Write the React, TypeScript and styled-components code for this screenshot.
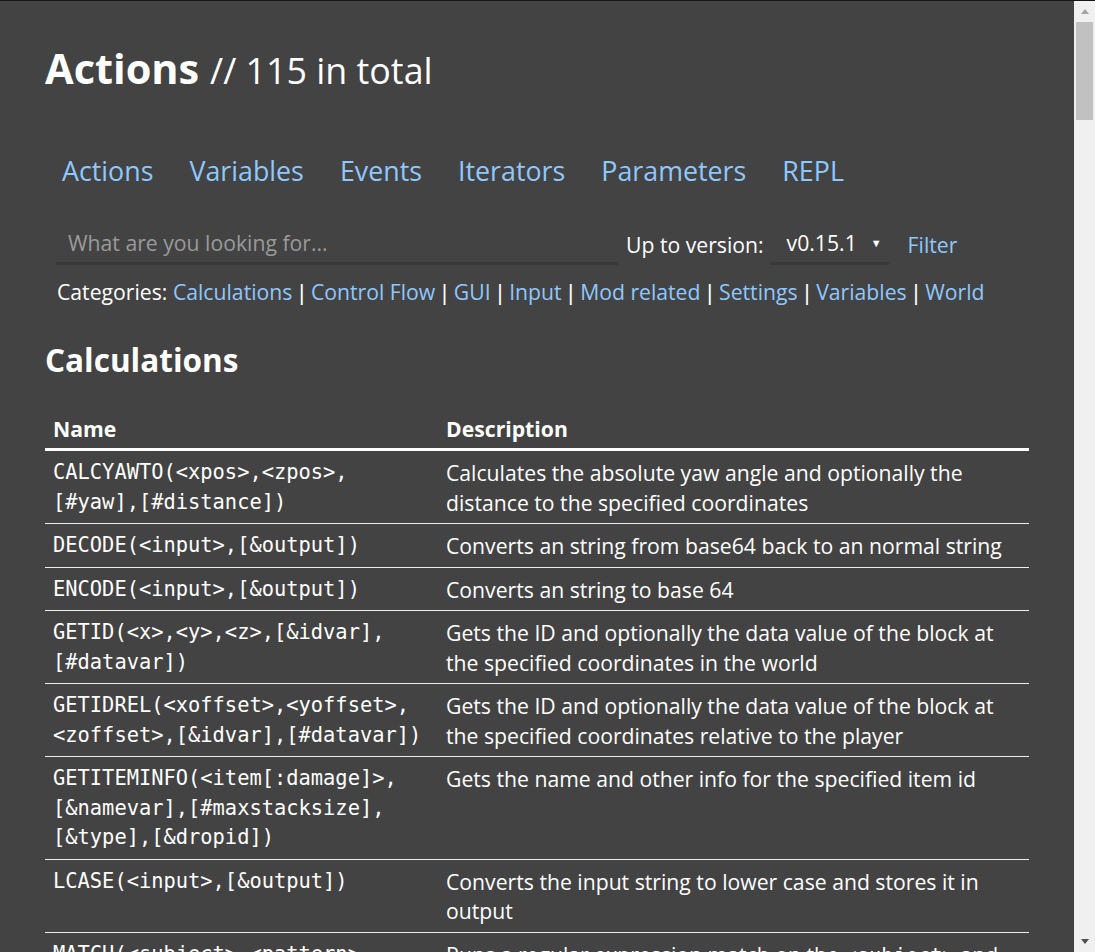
import React from "react";
import styled, { createGlobalStyle } from "styled-components";

const Global = createGlobalStyle`
  html, body { margin: 0; padding: 0; background: #434343; overflow: hidden; }
  body { font-family: "Open Sans", "Noto Sans", sans-serif; color: #fff; }
`;

const Frame = styled.div`
  height: 100vh;
  box-sizing: border-box;
  border-top: 1px solid #161616;
  display: flex;
  background: #434343;
`;

const Viewport = styled.div`
  flex: 1;
  min-width: 0;
  overflow: hidden;
`;

const ScrollTrack = styled.div`
  width: 21px;
  flex: none;
  background: #f0f0f0;
  display: flex;
  flex-direction: column;
  align-items: center;
`;

const ArrowBox = styled.div`
  height: 21px;
  width: 21px;
  display: flex;
  align-items: center;
  justify-content: center;
  flex: none;
`;

const Tri = styled.div<{ $down?: boolean }>`
  width: 0;
  height: 0;
  border-left: 4.5px solid transparent;
  border-right: 4.5px solid transparent;
  ${(p) =>
    p.$down
      ? "border-top: 5px solid #505050;"
      : "border-bottom: 5px solid #a3a3a3;"}
`;

const Thumb = styled.div`
  width: 17px;
  height: 98px;
  background: #c1c1c1;
  flex: none;
`;

const TrackSpace = styled.div`
  flex: 1;
`;

const Page = styled.main`
  padding: 37px 45px 40px 45px;
`;

const Title = styled.h1`
  margin: 0;
  font-size: 41.5px;
  line-height: 60px;
  font-weight: 700;
  color: #fff;
`;

const TitleRest = styled.span`
  font-size: 35.8px;
  font-weight: 400;
`;

const Nav = styled.nav`
  display: flex;
  gap: 36px;
  margin: 51px 0 0 17px;
`;

const NavLink = styled.a`
  font-size: 26.8px;
  line-height: 40px;
  color: #8fc8ff;
  text-decoration: none;
`;

const SearchRow = styled.div`
  display: flex;
  align-items: center;
  margin: 31px 0 0 11px;
  height: 44px;
`;

const SearchInput = styled.input`
  width: 562px;
  box-sizing: border-box;
  height: 42px;
  background: transparent;
  border: none;
  border-bottom: 3px solid #393939;
  padding: 0 12px;
  font-family: inherit;
  font-size: 21.2px;
  color: #fff;
  outline: none;
  &::placeholder { color: #9a9a9a; }
`;

const VersionLabel = styled.span`
  font-size: 21.2px;
  margin-left: 8px;
`;

const Select = styled.div`
  margin-left: 6px;
  width: 119px;
  box-sizing: border-box;
  height: 42px;
  border-bottom: 3px solid #393939;
  display: flex;
  align-items: center;
  justify-content: space-between;
  padding: 0 7px 0 17px;
  font-size: 21.2px;
`;

const Caret = styled.span`
  font-size: 11px;
`;

const FilterLink = styled.a`
  margin-left: 19px;
  font-size: 21.2px;
  color: #8fc8ff;
  text-decoration: none;
`;

const Categories = styled.div`
  margin: 11px 0 0 12px;
  font-size: 21.2px;
  line-height: 30px;
  white-space: nowrap;
`;

const CatLink = styled.a`
  color: #8fc8ff;
  text-decoration: none;
`;

const Sep = styled.span`
  font-family: "Liberation Sans", sans-serif;
  margin: 0 1px;
`;

const Section = styled.h2`
  margin: 30px 0 0 0;
  font-size: 31.5px;
  line-height: 44px;
  font-weight: 700;
`;

const Table = styled.table`
  margin-top: 28px;
  width: 100%;
  border-collapse: collapse;
  table-layout: fixed;
`;

const Th = styled.th<{ $w?: number }>`
  text-align: left;
  font-size: 21.2px;
  font-weight: 700;
  padding: 4px 8px 5px;
  line-height: 29px;
  border-bottom: 3px solid #fff;
  ${(p) => (p.$w ? `width: ${p.$w}px;` : "")}
`;

const Td = styled.td`
  vertical-align: top;
  padding: 7px 8px 6px;
  line-height: 29.5px;
  font-size: 21.2px;
  border-bottom: 1px solid #eee;
  white-space: nowrap;
`;

const NameCode = styled.div`
  font-family: "DejaVu Sans Mono", "Liberation Mono", monospace;
  font-size: 20.4px;
  line-height: 29.5px;
`;

const Code = styled.code`
  font-family: "DejaVu Sans Mono", "Liberation Mono", monospace;
  font-size: 20.4px;
  line-height: 1;
`;

type Row = { name: string[]; desc: React.ReactNode[] };

const rows: Row[] = [
  {
    name: ["CALCYAWTO(<xpos>,<zpos>,", "[#yaw],[#distance])"],
    desc: ["Calculates the absolute yaw angle and optionally the", "distance to the specified coordinates"],
  },
  { name: ["DECODE(<input>,[&output])"], desc: ["Converts an string from base64 back to an normal string"] },
  { name: ["ENCODE(<input>,[&output])"], desc: ["Converts an string to base 64"] },
  {
    name: ["GETID(<x>,<y>,<z>,[&idvar],", "[#datavar])"],
    desc: ["Gets the ID and optionally the data value of the block at", "the specified coordinates in the world"],
  },
  {
    name: ["GETIDREL(<xoffset>,<yoffset>,", "<zoffset>,[&idvar],[#datavar])"],
    desc: ["Gets the ID and optionally the data value of the block at", "the specified coordinates relative to the player"],
  },
  {
    name: ["GETITEMINFO(<item[:damage]>,", "[&namevar],[#maxstacksize],", "[&type],[&dropid])"],
    desc: ["Gets the name and other info for the specified item id"],
  },
  {
    name: ["LCASE(<input>,[&output])"],
    desc: ["Converts the input string to lower case and stores it in", "output"],
  },
  {
    name: ["MATCH(<subject>,<pattern>,", "[&target],[group],[default])"],
    desc: [
      <>Runs a regular expression match on the <Code>&lt;subject&gt;</Code> and</>,
      "stores the result in target",
    ],
  },
];

const navItems = ["Actions", "Variables", "Events", "Iterators", "Parameters", "REPL"];
const cats = ["Calculations", "Control Flow", "GUI", "Input", "Mod related", "Settings", "Variables", "World"];

function Lines({ items }: { items: React.ReactNode[] }) {
  return (
    <>
      {items.map((l, i) => (
        <React.Fragment key={i}>
          {i > 0 && <br />}
          {l}
        </React.Fragment>
      ))}
    </>
  );
}

export default function App() {
  return (
    <>
      <Global />
      <Frame>
        <Viewport>
          <Page>
            <Title>
              Actions <TitleRest>// 115 in total</TitleRest>
            </Title>
            <Nav>
              {navItems.map((n) => (
                <NavLink key={n} href="#">
                  {n}
                </NavLink>
              ))}
            </Nav>
            <SearchRow>
              <SearchInput placeholder="What are you looking for..." />
              <VersionLabel>Up to version:</VersionLabel>
              <Select>
                <span>v0.15.1</span>
                <Caret>▼</Caret>
              </Select>
              <FilterLink href="#">Filter</FilterLink>
            </SearchRow>
            <Categories>
              Categories:{" "}
              {cats.map((c, i) => (
                <React.Fragment key={c}>
                  {i > 0 && (
                    <>
                      {" "}
                      <Sep>|</Sep>{" "}
                    </>
                  )}
                  <CatLink href="#">{c}</CatLink>
                </React.Fragment>
              ))}
            </Categories>
            <Section>Calculations</Section>
            <Table>
              <thead>
                <tr>
                  <Th $w={377}>Name</Th>
                  <Th>Description</Th>
                </tr>
              </thead>
              <tbody>
                {rows.map((r, i) => (
                  <tr key={i}>
                    <Td>
                      <NameCode>
                        <Lines items={r.name} />
                      </NameCode>
                    </Td>
                    <Td>
                      <Lines items={r.desc} />
                    </Td>
                  </tr>
                ))}
              </tbody>
            </Table>
          </Page>
        </Viewport>
        <ScrollTrack>
          <ArrowBox>
            <Tri />
          </ArrowBox>
          <Thumb />
          <TrackSpace />
          <ArrowBox>
            <Tri $down />
          </ArrowBox>
        </ScrollTrack>
      </Frame>
    </>
  );
}
